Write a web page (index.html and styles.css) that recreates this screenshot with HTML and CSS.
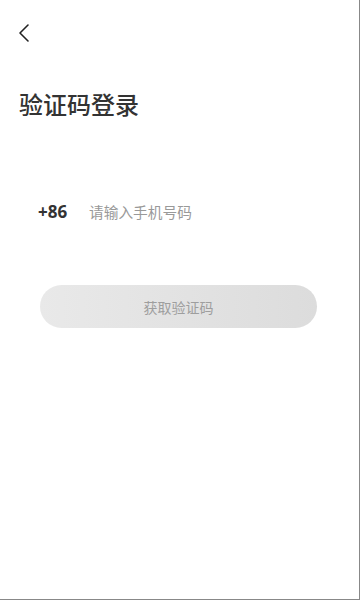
FILE: index.html
```html
<!DOCTYPE html>
<html lang="zh-CN">
<head>
    <meta charset="UTF-8">
    <meta name="viewport" content="width=device-width, initial-scale=1.0">
    <title>验证码登录</title>
    <link rel="stylesheet" href="styles.css">
</head>
<body>
    <div class="page">
        <div class="nav">
            <button class="back-btn" aria-label="返回">
                <svg width="14" height="20" viewBox="0 0 14 20">
                    <path d="M11 2 L3 10 L11 18" fill="none" stroke="#222" stroke-width="1.6" stroke-linecap="round" stroke-linejoin="round"/>
                </svg>
            </button>
        </div>
        <h1 class="title">验证码登录</h1>
        <div class="phone-row">
            <span class="area-code">+86</span>
            <input class="phone-input" type="tel" placeholder="请输入手机号码">
        </div>
        <button class="code-btn">获取验证码</button>
    </div>
</body>
</html>
```

FILE: styles.css
```css
html, body {
    margin: 0;
    padding: 0;
}
body {
    font-family: "Noto Sans CJK SC", "Noto Sans", sans-serif;
    background-color: white;
    color: #333;
}
.page {
    box-sizing: border-box;
    width: 360px;
    height: 600px;
    border-right: 1px solid #888;
    border-bottom: 1px solid #888;
    display: flex;
    flex-direction: column;
}
.nav {
    height: 44px;
    padding: 22px 0 0 14px;
    box-sizing: border-box;
}
.back-btn {
    background: none;
    border: none;
    padding: 0;
    margin: 0;
    width: 20px;
    height: 22px;
    display: flex;
    align-items: center;
    justify-content: center;
    cursor: pointer;
}
.title {
    margin: 42px 0 0 19px;
    font-size: 24px;
    font-weight: 500;
    line-height: 36px;
    color: #333;
}
.phone-row {
    display: flex;
    align-items: center;
    margin: 74px 0 0 38px;
    height: 30px;
}
.area-code {
    font-family: "Open Sans", "Noto Sans", sans-serif;
    font-size: 17px;
    font-weight: bold;
    color: #333;
    width: 51px;
}
.phone-input {
    border: none;
    outline: none;
    padding: 0;
    font-family: "Noto Sans CJK SC", sans-serif;
    font-size: 14.7px;
    color: #333;
    background: transparent;
    width: 200px;
}
.phone-input::placeholder {
    color: #999;
}
.code-btn {
    margin: 59px 0 0 40px;
    width: 277px;
    height: 43px;
    border: none;
    border-radius: 9999px;
    background: linear-gradient(to right, #e9e9e9, #dcdcdc);
    color: #9e9e9e;
    font-family: "Noto Sans CJK SC", sans-serif;
    font-size: 14px;
    cursor: pointer;
}
```
